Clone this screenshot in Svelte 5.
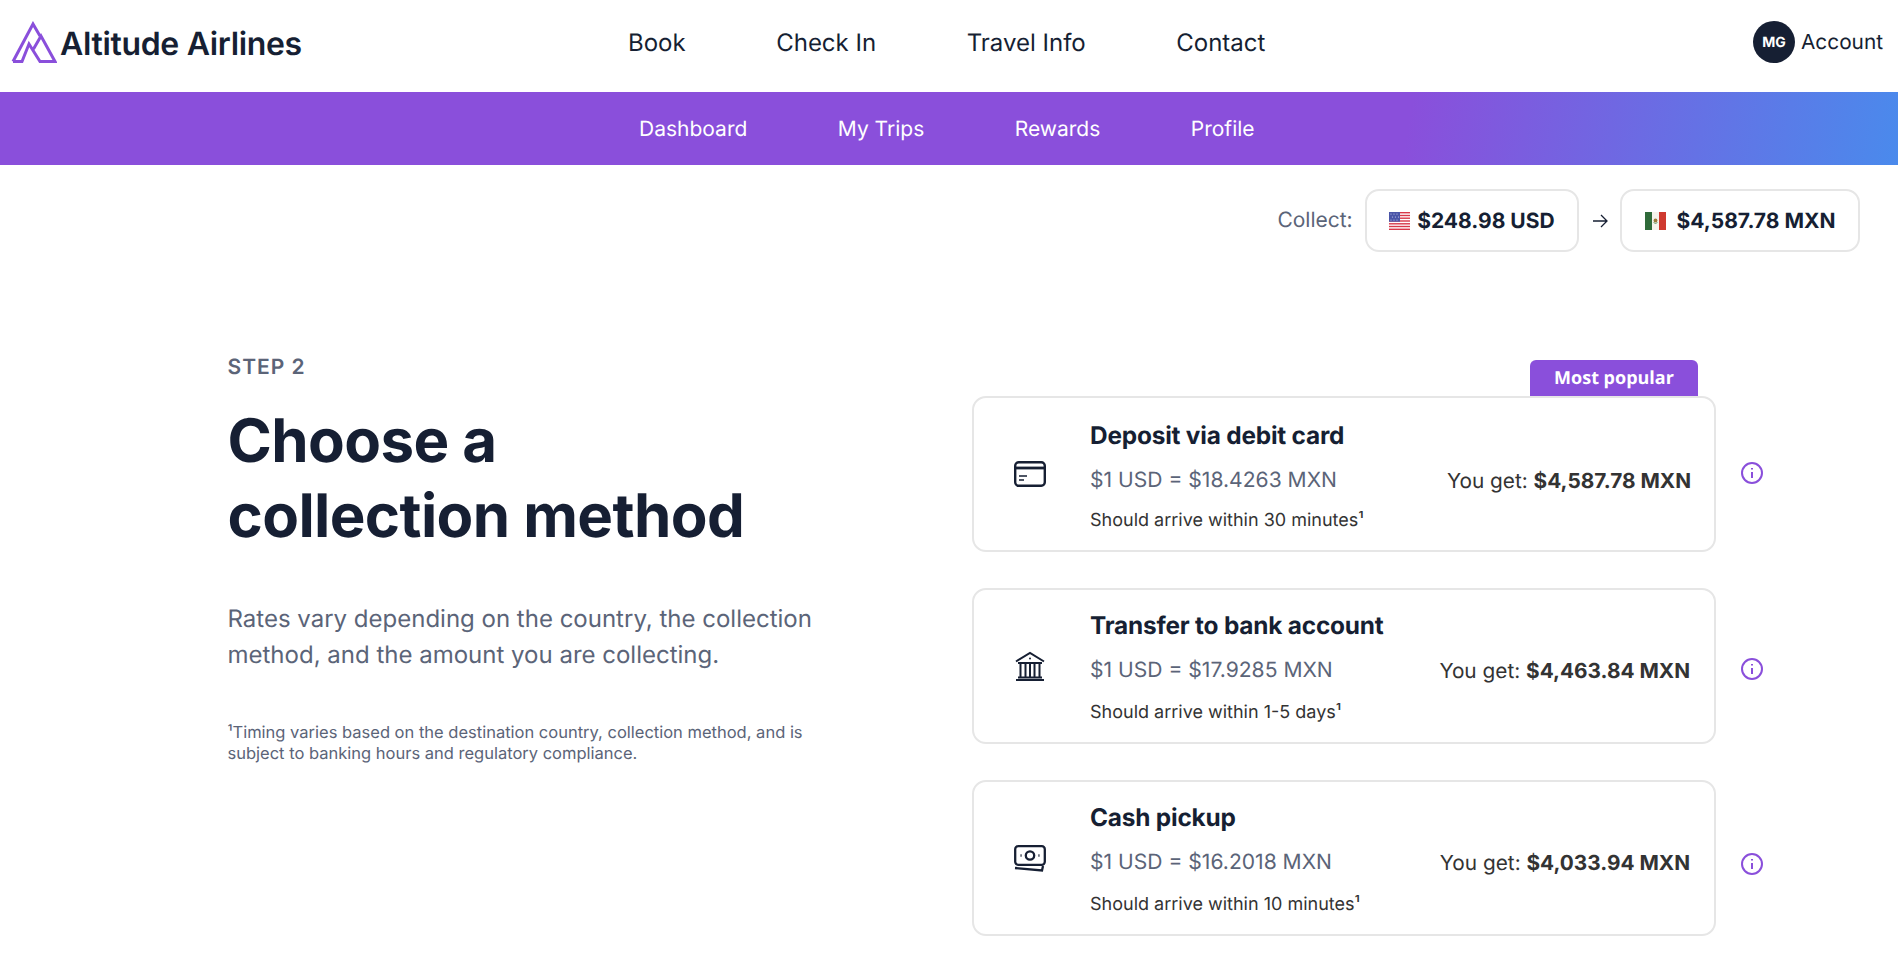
<script>
  const topLinks = ['Book', 'Check In', 'Travel Info', 'Contact'];
  const subLinks = ['Dashboard', 'My Trips', 'Rewards', 'Profile'];
  const methods = [
    { id: 'card', title: 'Deposit via debit card', rate: '$1 USD = $18.4263 MXN', eta: 'Should arrive within 30 minutes¹', amount: '$4,587.78 MXN', popular: true, getShift: 14, infoShift: -2 },
    { id: 'bank', title: 'Transfer to bank account', rate: '$1 USD = $17.9285 MXN', eta: 'Should arrive within 1-5 days¹', amount: '$4,463.84 MXN', getShift: 10, infoShift: 6 },
    { id: 'cash', title: 'Cash pickup', rate: '$1 USD = $16.2018 MXN', eta: 'Should arrive within 10 minutes¹', amount: '$4,033.94 MXN', getShift: 10, infoShift: 12 }
  ];
</script>

<header class="top">
  <a class="brand" href="#home">
    <svg class="logo" viewBox="0 0 46 42" width="46" height="42" fill="none" stroke="#8a4fdb" stroke-width="3">
      <path d="M2 40.5 L22 3 L29 15" />
      <path d="M2 40.5 H11 L18 23 L29 40.5 H44 L30 15 L22.5 28" />
    </svg>
    <span>Altitude Airlines</span>
  </a>
  <nav class="top-nav">
    {#each topLinks as link}
      <a href="#top">{link}</a>
    {/each}
  </nav>
  <a class="account" href="#account">
    <span class="avatar">MG</span>
    <span>Account</span>
  </a>
</header>

<nav class="sub-nav">
  {#each subLinks as link}
    <a href="#sub">{link}</a>
  {/each}
</nav>

<div class="collect">
  <span class="collect-label">Collect:</span>
  <div class="pill">
    <svg viewBox="0 0 21 18" width="21" height="18">
      <rect width="21" height="18" fill="#fff" />
      <g fill="#d8394a">
        <rect width="21" height="1.4" /><rect y="2.8" width="21" height="1.4" /><rect y="5.5" width="21" height="1.4" />
        <rect y="8.3" width="21" height="1.4" /><rect y="11.1" width="21" height="1.4" /><rect y="13.8" width="21" height="1.4" />
        <rect y="16.6" width="21" height="1.4" />
      </g>
      <rect width="11" height="9.7" fill="#4a55a8" />
      <g fill="#c9cdea">
        <circle cx="2" cy="2" r="0.6" /><circle cx="5" cy="2" r="0.6" /><circle cx="8" cy="2" r="0.6" />
        <circle cx="3.5" cy="5" r="0.6" /><circle cx="6.5" cy="5" r="0.6" /><circle cx="9.5" cy="5" r="0.6" />
        <circle cx="2" cy="8" r="0.6" /><circle cx="5" cy="8" r="0.6" /><circle cx="8" cy="8" r="0.6" />
      </g>
    </svg>
    <span>$248.98 USD</span>
  </div>
  <svg class="arrow" viewBox="0 0 16 16" width="16" height="16" fill="none" stroke="#161f33" stroke-width="1.3">
    <path d="M1 8 H15 M9 2 L15 8 L9 14" />
  </svg>
  <div class="pill pill-mx">
    <svg viewBox="0 0 21 18" width="21" height="18">
      <rect width="7" height="18" fill="#2f6b3a" />
      <rect x="7" width="7" height="18" fill="#f6f3ec" />
      <rect x="14" width="7" height="18" fill="#cf3a30" />
      <circle cx="10.5" cy="8.5" r="1.9" fill="#9a7a3c" />
      <path d="M8.5 10.5 Q10.5 12.5 12.5 10.5" fill="none" stroke="#4d8a4f" stroke-width="0.8" />
    </svg>
    <span>$4,587.78 MXN</span>
  </div>
</div>

<main class="content">
  <section class="intro">
    <div class="step">STEP 2</div>
    <h1>Choose a<br />collection method</h1>
    <p class="lead">Rates vary depending on the country, the collection method, and the amount you are collecting.</p>
    <p class="note">¹Timing varies based on the destination country, collection method, and is subject to banking hours and regulatory compliance.</p>
  </section>

  <section class="methods">
    {#each methods as m}
      <div class="method-row">
        <article class="method" class:popular={m.popular}>
          {#if m.popular}
            <span class="badge">Most popular</span>
          {/if}
          <div class="method-icon">
            {#if m.id === 'card'}
              <svg viewBox="0 0 32 26" width="32" height="26" fill="none" stroke="#161f33" stroke-width="2.4">
                <rect x="1.2" y="1.2" width="29.6" height="23.6" rx="3.5" />
                <path d="M1.2 7 H30.8" stroke-width="2.8" />
                <path d="M5 15 H13 M5 19 H10" stroke-width="1.7" />
              </svg>
            {:else if m.id === 'bank'}
              <svg viewBox="0 0 30 30" width="30" height="30" fill="none" stroke="#161f33" stroke-width="2">
                <path d="M1 10.5 L15 2 L29 10.5" />
                <path d="M3 12 H27" />
                <path d="M5.5 13 V26 M10.5 13 V26 M15 13 V26 M19.5 13 V26 M24.5 13 V26" />
                <path d="M3 26.5 H27 M1 29 H29" />
                <circle cx="15" cy="7.5" r="1" fill="#161f33" stroke="none" />
              </svg>
            {:else}
              <svg viewBox="0 0 32 27" width="32" height="27" fill="none" stroke="#161f33" stroke-width="2.3">
                <rect x="1.2" y="1.2" width="29.6" height="18.6" rx="3" />
                <circle cx="16" cy="10.5" r="4.2" />
                <path d="M6.5 10.5 H7.6 M24.4 10.5 H25.5" />
                <path d="M1 23 L28 25.5 L29 21" />
              </svg>
            {/if}
          </div>
          <div class="method-body">
            <h2>{m.title}</h2>
            <div class="rate">{m.rate}</div>
            <div class="eta">{m.eta}</div>
          </div>
          <div class="get" style="margin-top: {m.getShift}px">You get: <strong>{m.amount}</strong></div>
        </article>
        <svg class="info" style="margin-top: {m.infoShift}px" viewBox="0 0 24 24" width="24" height="24" fill="none" stroke="#8a4fdb" stroke-width="2">
          <circle cx="12" cy="12" r="10" />
          <path d="M12 11 V17 M12 7 V8.5" />
        </svg>
      </div>
    {/each}
  </section>
</main>

<style>
  :global(body) {
    font-family: Inter, "Liberation Sans", sans-serif;
    color: #161f33;
    background: #fff;
    text-rendering: geometricPrecision;
  }

  a {
    color: inherit;
    text-decoration: none;
  }

  .top {
    height: 92px;
    box-sizing: border-box;
    display: flex;
    align-items: center;
    justify-content: space-between;
    padding: 0 15px 8px 11px;
  }

  .brand {
    display: flex;
    align-items: center;
    gap: 3px;
    font-size: 32px;
    font-weight: 600;
    letter-spacing: -0.33px;
  }

  .brand span {
    padding-top: 2px;
  }

  .top-nav {
    display: flex;
    gap: 90.5px;
    font-size: 24px;
    position: absolute;
    left: 628px;
  }

  .account {
    display: flex;
    align-items: center;
    gap: 6px;
    font-size: 20.8px;
  }

  .avatar {
    width: 42px;
    height: 42px;
    border-radius: 50%;
    background: #161f33;
    color: #fff;
    font-size: 14px;
    font-weight: 700;
    display: flex;
    align-items: center;
    justify-content: center;
  }

  .sub-nav {
    height: 73px;
    box-sizing: border-box;
    padding: 2px 0 0 639px;
    display: flex;
    align-items: center;
    gap: 90.5px;
    font-size: 21px;
    color: #fff;
    background: linear-gradient(100deg, #8a4fdb 0 74%, #4a8aec 100%);
  }

  .collect {
    display: flex;
    align-items: center;
    justify-content: flex-end;
    gap: 12px;
    padding: 24px 38px 0 0;
    font-size: 21px;
  }

  .collect-label {
    color: #5b6478;
  }

  .pill {
    height: 63px;
    box-sizing: border-box;
    padding: 1px 22.5px 0;
    display: flex;
    align-items: center;
    gap: 7px;
    border: 2px solid #e6e6e6;
    border-radius: 14px;
    font-size: 21px;
    font-weight: 700;
  }

  .pill-mx {
    gap: 11px;
  }

  .arrow {
    margin: 0 0.5px;
  }

  .content {
    display: flex;
    padding: 103px 0 0 227.5px;
  }

  .intro {
    width: 744.5px;
    flex: none;
  }

  .step {
    font-size: 21px;
    font-weight: 600;
    letter-spacing: 1px;
    color: #5b6478;
  }

  h1 {
    margin: 24px 0 0;
    font-size: 60px;
    line-height: 75px;
    font-weight: 700;
    letter-spacing: -0.6px;
  }

  .lead {
    margin: 47px 0 0;
    width: 600px;
    font-size: 24px;
    line-height: 36px;
    color: #5b6478;
  }

  .note {
    margin: 49px 0 0;
    width: 600px;
    font-size: 16.5px;
    line-height: 21px;
    color: #5b6478;
  }

  .methods {
    display: flex;
    flex-direction: column;
    gap: 36px;
    padding-top: 41px;
  }

  .method-row {
    display: flex;
    align-items: center;
    gap: 24px;
  }

  .method {
    position: relative;
    width: 744px;
    height: 156px;
    box-sizing: border-box;
    display: flex;
    align-items: center;
    border: 2px solid #e6e6e6;
    border-radius: 14px;
    padding-right: 23px;
  }

  .badge {
    position: absolute;
    right: 16px;
    top: -38px;
    width: 168px;
    height: 36px;
    display: flex;
    align-items: center;
    justify-content: center;
    background: #8a4fdb;
    color: #fff;
    font-family: "Open Sans", sans-serif;
    font-size: 18px;
    font-weight: 700;
    border-radius: 6px 6px 0 0;
  }

  .method-icon {
    width: 114px;
    flex: none;
    display: flex;
    justify-content: center;
    padding-right: 3px;
    box-sizing: border-box;
  }

  .method-body {
    flex: 1;
    padding-left: 2px;
  }

  h2 {
    margin: 0;
    font-size: 24.4px;
    font-weight: 700;
    letter-spacing: -0.2px;
  }

  .popular h2 {
    margin-top: 2px;
  }

  .rate {
    margin-top: 18.5px;
    font-size: 21.1px;
    color: #5b6478;
  }

  .eta {
    margin-top: 18.5px;
    font-size: 18px;
    color: #333;
  }

  .popular .eta {
    margin-top: 16.5px;
  }

  .get {
    font-size: 20.8px;
    color: #333;
  }

  .method:not(.popular) .get {
    margin-right: 1px;
  }

  .get strong {
    font-weight: 700;
  }
</style>
